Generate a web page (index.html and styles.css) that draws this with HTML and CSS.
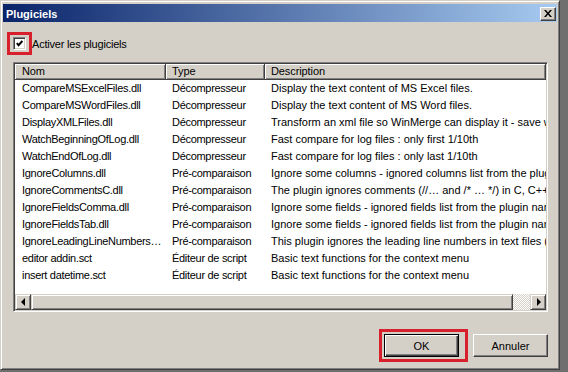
FILE: index.html
```html
<!DOCTYPE html>
<html lang="fr">
<head>
    <meta charset="UTF-8">
    <meta name="viewport" content="width=device-width, initial-scale=1.0">
    <title>Plugiciels</title>
    <link rel="stylesheet" href="styles.css">
</head>
<body>

    <div class="window">
        <!-- Title bar -->
        <div class="titlebar">
            <span class="title">Plugiciels</span>
            <button class="close" type="button">
                <svg width="8" height="7" viewBox="0 0 8 7"><path d="M0 0h2l2 2.4L6 0h2L5 3.5 8 7H6L4 4.6 2 7H0l3-3.5z"/></svg>
            </button>
        </div>

        <div class="content">
            <label class="check-row">
                <span class="checkbox">
                    <svg width="7" height="7" viewBox="0 0 7 7"><polyline points="0.8,3.2 2.6,5.2 6.4,1" fill="none" stroke="#000" stroke-width="2"/></svg>
                </span>
                <span>Activer les plugiciels</span>
            </label>

            <!-- Plugin list -->
            <div class="listview">
                <div class="list-head">
                    <div class="col">Nom</div>
                    <div class="col">Type</div>
                    <div class="col">Description</div>
                </div>
                <div class="list-rows">
                    <div class="row"><div class="cell">CompareMSExcelFiles.dll</div><div class="cell">Décompresseur</div><div class="cell">Display the text content of MS Excel files.</div></div>
                    <div class="row"><div class="cell">CompareMSWordFiles.dll</div><div class="cell">Décompresseur</div><div class="cell">Display the text content of MS Word files.</div></div>
                    <div class="row"><div class="cell">DisplayXMLFiles.dll</div><div class="cell">Décompresseur</div><div class="cell">Transform an xml file so WinMerge can display it - save with indentation</div></div>
                    <div class="row"><div class="cell">WatchBeginningOfLog.dll</div><div class="cell">Décompresseur</div><div class="cell">Fast compare for log files : only first 1/10th</div></div>
                    <div class="row"><div class="cell">WatchEndOfLog.dll</div><div class="cell">Décompresseur</div><div class="cell">Fast compare for log files : only last 1/10th</div></div>
                    <div class="row"><div class="cell">IgnoreColumns.dll</div><div class="cell">Pré-comparaison</div><div class="cell">Ignore some columns - ignored columns list from the plugin name</div></div>
                    <div class="row"><div class="cell">IgnoreCommentsC.dll</div><div class="cell">Pré-comparaison</div><div class="cell">The plugin ignores comments (//… and /* … */) in C, C++, PHP and JavaScript files.</div></div>
                    <div class="row"><div class="cell">IgnoreFieldsComma.dll</div><div class="cell">Pré-comparaison</div><div class="cell">Ignore some fields - ignored fields list from the plugin name</div></div>
                    <div class="row"><div class="cell">IgnoreFieldsTab.dll</div><div class="cell">Pré-comparaison</div><div class="cell">Ignore some fields - ignored fields list from the plugin name</div></div>
                    <div class="row"><div class="cell">IgnoreLeadingLineNumbers.dll</div><div class="cell">Pré-comparaison</div><div class="cell">This plugin ignores the leading line numbers in text files (e.g. NC and BASIC files).</div></div>
                    <div class="row"><div class="cell">editor addin.sct</div><div class="cell">Éditeur de script</div><div class="cell">Basic text functions for the context menu</div></div>
                    <div class="row"><div class="cell">insert datetime.sct</div><div class="cell">Éditeur de script</div><div class="cell">Basic text functions for the context menu</div></div>
                </div>
                <!-- Horizontal scrollbar -->
                <div class="hscroll">
                    <div class="sb-btn"><span class="tri tri-left"></span></div>
                    <div class="sb-thumb"></div>
                    <div class="sb-track"></div>
                    <div class="sb-btn"><span class="tri tri-right"></span></div>
                </div>
            </div>

            <div class="buttons">
                <button class="btn btn-default" type="button">OK</button>
                <button class="btn" type="button">Annuler</button>
            </div>
        </div>

        <!-- Red highlight annotations -->
        <div class="mark mark-check"></div>
        <div class="mark mark-ok"></div>
    </div>

</body>
</html>
```

FILE: styles.css
```css
body {
    margin: 0;
    background: #6f6f6f;
    font-family: "Liberation Sans", Arial, sans-serif;
    font-size: 11px;
    color: #000;
}

/* Dialog frame */
.window {
    box-sizing: border-box;
    width: 560px;
    height: 370px;
    position: relative;
    background: #d4d0c8;
    border: 1px solid;
    border-color: #d4d0c8 #404040 #404040 #d4d0c8;
    box-shadow: inset 1px 1px #fff, inset -1px -1px #808080;
    padding: 3px 2px 2px 2px;
}

.titlebar {
    height: 18px;
    display: flex;
    align-items: center;
    justify-content: space-between;
    padding: 0 1px 0 3px;
    background: linear-gradient(to right, #0a246a, #a6caf0);
}

.title {
    color: #fff;
    font-weight: bold;
    padding-top: 1px;
}

.close {
    box-sizing: border-box;
    width: 16px;
    height: 14px;
    padding: 0;
    margin-top: 1px;
    display: flex;
    align-items: center;
    justify-content: center;
    background: #d4d0c8;
    border: 1px solid;
    border-color: #fff #404040 #404040 #fff;
    box-shadow: inset -1px -1px #808080;
}

.content {
    padding: 0 9px 0 10px;
}

.check-row {
    display: flex;
    align-items: center;
    gap: 6px;
    height: 13px;
    margin-top: 15px;
    letter-spacing: -0.2px;
}

.checkbox {
    box-sizing: border-box;
    width: 13px;
    height: 13px;
    display: flex;
    align-items: center;
    justify-content: center;
    background: #fff;
    border: 1px solid;
    border-color: #808080 #fff #fff #808080;
    box-shadow: inset 1px 1px #404040, inset -1px -1px #d4d0c8;
}

/* List view */
.listview {
    box-sizing: border-box;
    width: 535px;
    height: 250px;
    margin-top: 12px;
    display: flex;
    flex-direction: column;
    border: 1px solid;
    border-color: #808080 #fff #fff #808080;
    box-shadow: inset 1px 1px #404040, inset -1px -1px #d4d0c8;
    padding: 1px;
    overflow: hidden;
}

.list-head,
.row {
    display: grid;
    grid-template-columns: 151px 99px 1fr;
}

.list-head .col {
    box-sizing: border-box;
    height: 16px;
    line-height: 15px;
    padding-left: 6px;
    background: #d4d0c8;
    border-right: 1px solid #404040;
    border-bottom: 1px solid #404040;
    box-shadow: inset 1px 1px #fff, inset -1px -1px #808080;
    letter-spacing: -0.1px;
}

.list-head .col:first-child {
    padding-left: 7px;
}

.list-rows {
    flex: 1;
    background: #fff;
}

.row {
    height: 17px;
    line-height: 17px;
    letter-spacing: -0.3px;
}

.cell {
    padding: 0 3px 0 6px;
    white-space: nowrap;
    overflow: hidden;
    text-overflow: ellipsis;
}

.cell:first-child {
    padding-left: 7px;
}

.cell:last-child {
    text-overflow: clip;
    padding-right: 0;
    letter-spacing: 0;
}

.hscroll {
    height: 16px;
    display: flex;
}

.sb-btn,
.sb-thumb {
    box-sizing: border-box;
    height: 16px;
    background: #d4d0c8;
    border: 1px solid;
    border-color: #d4d0c8 #404040 #404040 #d4d0c8;
    box-shadow: inset 1px 1px #fff, inset -1px -1px #808080;
}

.sb-btn {
    width: 16px;
    display: flex;
    align-items: center;
    justify-content: center;
}

.sb-thumb {
    width: 482px;
}

.sb-track {
    flex: 1;
    background: repeating-conic-gradient(#fff 0 25%, #d4d0c8 0 50%) 0 0 / 2px 2px;
}

.tri {
    width: 0;
    height: 0;
    border-top: 4px solid transparent;
    border-bottom: 4px solid transparent;
}

.tri-left {
    border-right: 4px solid #000;
    margin-right: 1px;
}

.tri-right {
    border-left: 4px solid #000;
    margin-left: 1px;
}

/* Dialog buttons */
.buttons {
    display: flex;
    justify-content: flex-end;
    gap: 14px;
    margin-top: 22px;
}

.btn {
    box-sizing: border-box;
    width: 75px;
    height: 23px;
    padding: 0;
    font-family: inherit;
    font-size: 11px;
    color: #000;
    background: #d4d0c8;
    border: 1px solid;
    border-color: #fff #404040 #404040 #fff;
    box-shadow: inset -1px -1px #808080;
}

.btn-default {
    border-color: #000;
    box-shadow: inset 1px 1px #fff, inset -1px -1px #404040, inset -2px -2px #808080;
}

/* Annotation boxes drawn over the dialog */
.mark {
    position: absolute;
    box-sizing: border-box;
    border: 3px solid #d8202c;
}

.mark-check {
    left: 6px;
    top: 31px;
    width: 25px;
    height: 23px;
}

.mark-ok {
    left: 378px;
    top: 328px;
    width: 89px;
    height: 33px;
}
```
